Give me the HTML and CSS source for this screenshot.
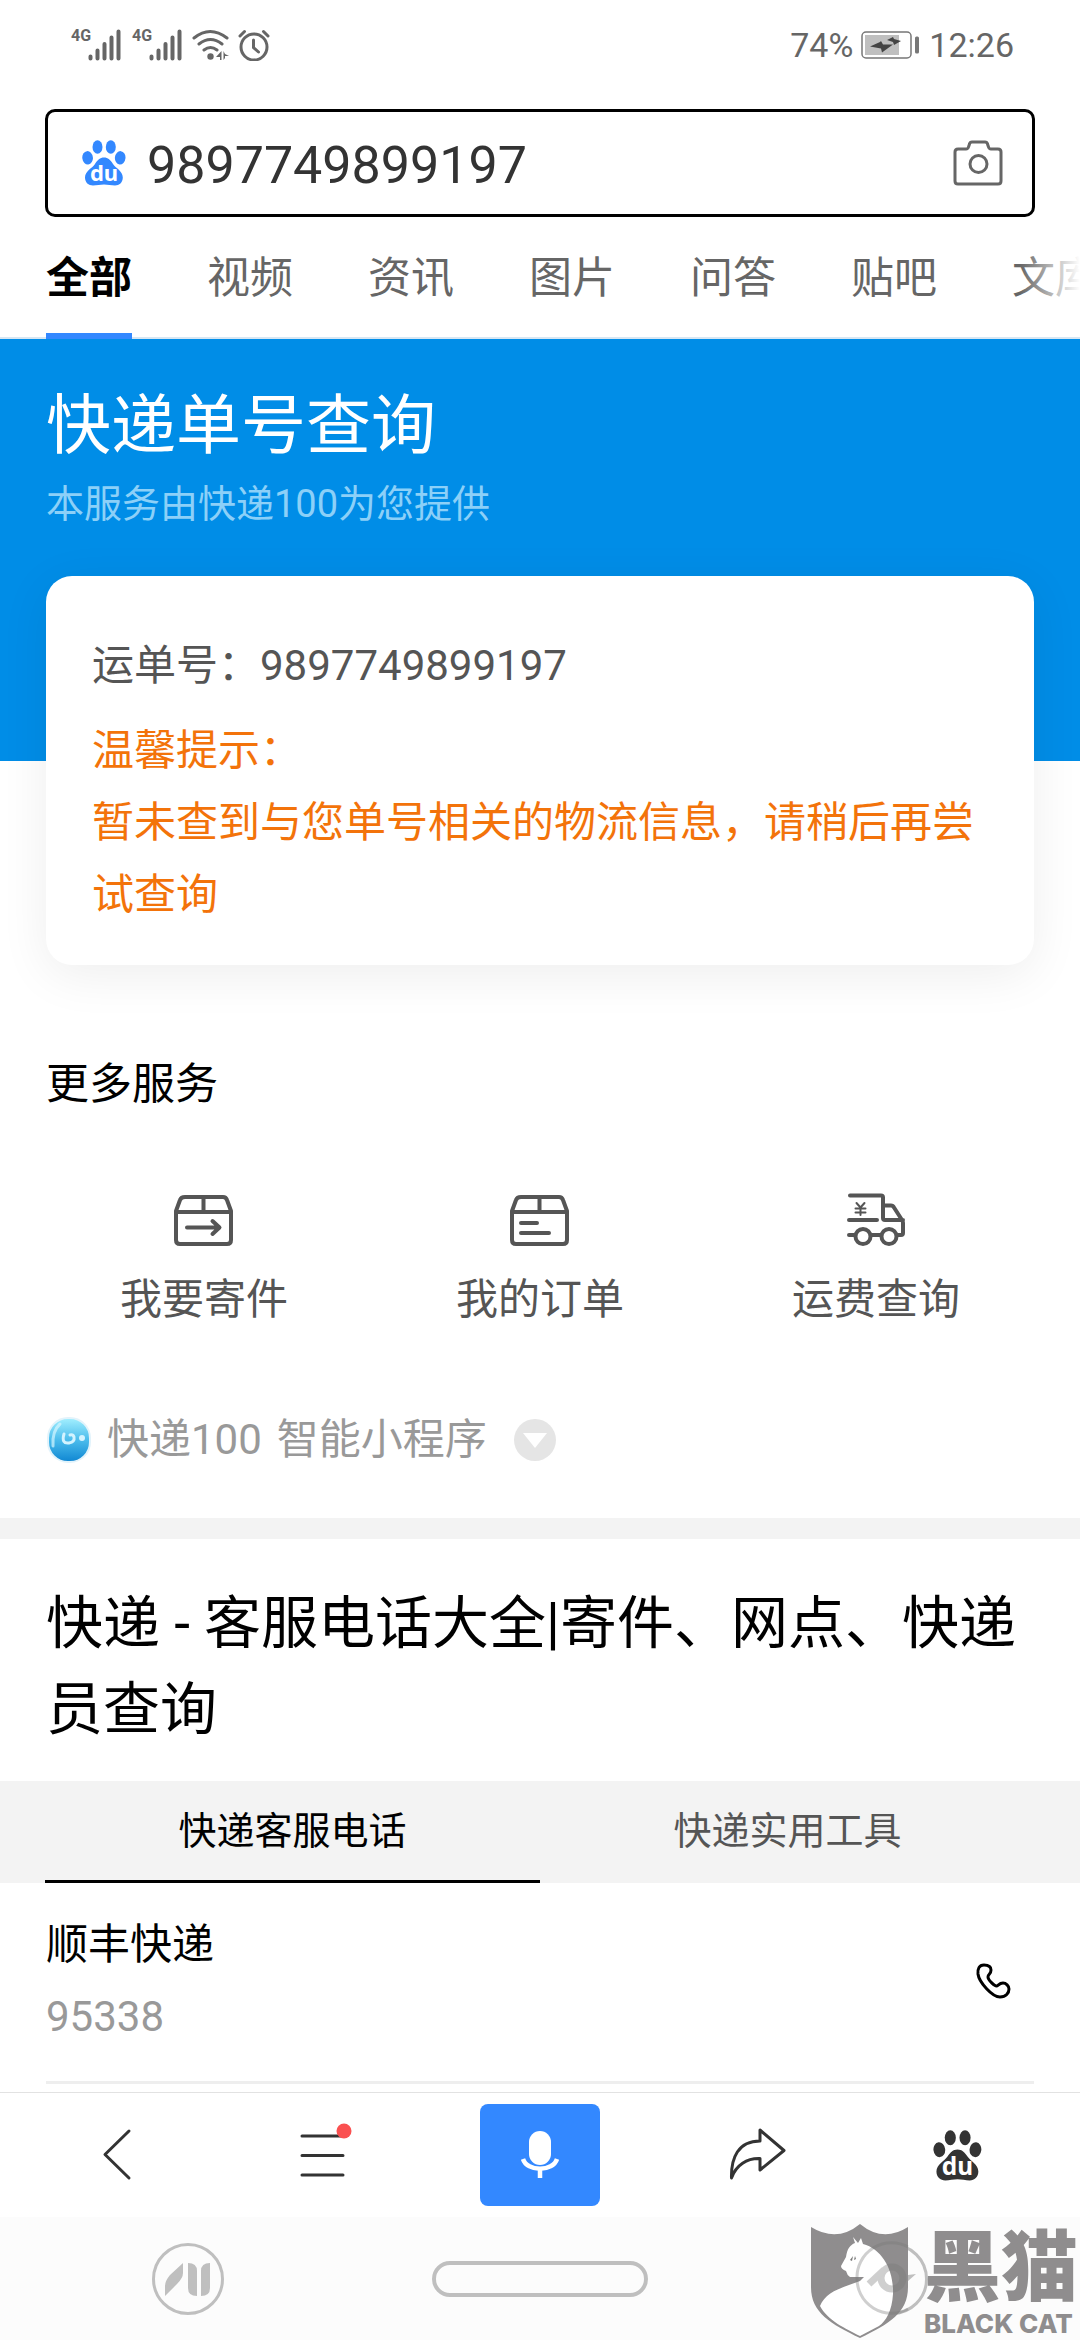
FILE: index.html
```html
<!DOCTYPE html>
<html lang="zh-CN">
<head>
	<meta charset="UTF-8">
	<meta name="viewport" content="width=device-width, initial-scale=1.0">
	<meta name="format-detection" content="telephone=no">
	<title>9897749899197</title>
	<link rel="stylesheet" href="styles.css">
</head>
<body>
	<svg class="defs" aria-hidden="true">
		<symbol id="paw" viewBox="0 0 44 46">
			<ellipse cx="15.5" cy="7" rx="5" ry="6.7"/>
			<ellipse cx="28.8" cy="7" rx="5" ry="6.7"/>
			<ellipse cx="5.6" cy="17.8" rx="5.3" ry="6.7" transform="rotate(-6 5.6 17.8)"/>
			<ellipse cx="38.2" cy="17.8" rx="5.3" ry="6.7" transform="rotate(6 38.2 17.8)"/>
			<path d="M22 17.5c4 0 6.500 2.500 9 6.500 2.500 4 9.800 7 9.800 13.500 0 5-3.500 8-7.800 8-4 0-7-1-11-1s-7 1-11 1c-4.500 0-8-3-8-8 0-6.500 7.500-9.500 10-13.500s5-6.500 9-6.500z"/>
			<text class="paw-text" x="22" y="41" text-anchor="middle">du</text>
		</symbol>
		<symbol id="signal" viewBox="0 0 34 32">
			<path d="M2.500 27.500v2M9.500 21.500v8M16.500 15v14.500M23.500 8.500v21M30.500 2.500v27" fill="none" stroke="#666" stroke-width="4" stroke-linecap="round"/>
		</symbol>
	</svg>

	<div class="status">
		<span class="net">4G</span><svg class="signal"><use href="#signal"/></svg>
		<span class="net net-2">4G</span><svg class="signal"><use href="#signal"/></svg>
		<svg class="wifi" viewBox="0 0 38 32">
			<path d="M2 9q16-13 33 0M7 15q11.500-9 23 0M12 21q6.500-5 13 0" fill="none" stroke="#666" stroke-width="3" stroke-linecap="round"/>
			<circle cx="18.500" cy="27.500" r="3.200" fill="#666"/>
			<path d="M29.500 22v9h-1.500v-3h-4zM31.500 22v9l1.500-2v-2h4l-4-2z" fill="#666"/>
		</svg>
		<svg class="alarm" viewBox="0 0 32 32">
			<g fill="none" stroke="#666" stroke-width="3" stroke-linecap="round">
				<circle cx="16" cy="18" r="13"/>
				<path d="M15.500 11v7.500l5 4.500M2 7l4.500-4.500M30 7l-4.500-4.500"/>
			</g>
		</svg>
		<span class="percent">74%</span>
		<svg class="battery" viewBox="0 0 60 28">
			<rect x="1" y="1" width="49" height="26" rx="4" fill="#fff" stroke="#777" stroke-width="1.500"/>
			<rect x="4" y="4" width="34" height="20" fill="#bfbfbf"/>
			<rect x="54" y="5.500" width="4" height="17" rx="1.500" fill="#777"/>
			<path d="M9 15.500l10-4.500 1-1 2 3.500h10l-11 8-1-4zM26 9l6-3 1 2 7 2-7 4-1-3z" fill="#444"/>
		</svg>
		<span class="time">12:26</span>
	</div>

	<form class="search">
		<svg class="search-logo"><use href="#paw"/></svg>
		<input class="search-input" type="text" value="9897749899197" aria-label="搜索">
		<button class="camera" type="button" aria-label="拍照搜索">
			<svg viewBox="0 0 50 46">
				<path d="M5 9h8q2 0 2.500-2l1-3q.5-2 2.500-2h13q2 0 2.500 2l1 3q.5 2 2.500 2h7q3 0 3 3v29q0 3-3 3h-40q-3 0-3-3v-29q0-3 3-3z"/>
				<circle cx="25.500" cy="24" r="8.500"/>
			</svg>
		</button>
	</form>

	<nav class="tabs">
		<a class="tab active" href="#">全部</a>
		<a class="tab" href="#">视频</a>
		<a class="tab" href="#">资讯</a>
		<a class="tab" href="#">图片</a>
		<a class="tab" href="#">问答</a>
		<a class="tab" href="#">贴吧</a>
		<a class="tab" href="#">文库</a>
	</nav>

	<main>
		<section class="express">
			<div class="banner">
				<h1>快递单号查询</h1>
				<p>本服务由快递100为您提供</p>
			</div>
			<div class="card">
				<p class="number">运单号：9897749899197</p>
				<p class="tip">温馨提示：<br>暂未查到与您单号相关的物流信息，请稍后再尝试查询</p>
			</div>
			<h2 class="more">更多服务</h2>
			<div class="services">
				<a class="service" href="#">
					<svg viewBox="0 0 60 60">
						<path d="M11 7h38q3 0 4 3l4 11v29q0 4-4 4H6q-4 0-4-4V21l4-11q1-3 5-3zM2 22h55M29.500 7v15M13 37.500h32M38.500 31l7 6.500-7 6.500"/>
					</svg>
					<span>我要寄件</span>
				</a>
				<a class="service" href="#">
					<svg viewBox="0 0 60 60">
						<path d="M11 7h38q3 0 4 3l4 11v29q0 4-4 4H6q-4 0-4-4V21l4-11q1-3 5-3zM2 22h55M29.500 7v15M11 33h16M11 43h28"/>
					</svg>
					<span>我的订单</span>
				</a>
				<a class="service" href="#">
					<svg viewBox="0 0 60 60">
						<path d="M4 5.500h31q2 0 2 2V28q0 2 2 2h18M3 30h28M37 15.500h8q2 0 3 2l8 12.500q1 1 1 3v10q0 2-2 2h-3M3 45h5M26 45h8"/>
						<circle cx="17" cy="46.500" r="7.500"/>
						<circle cx="43" cy="46.500" r="7.500"/>
						<path class="thin" d="M10.500 13l4 4.500 4-4.500M9.500 18.500h10M9.500 22.500h10M14.500 18v7"/>
					</svg>
					<span>运费查询</span>
				</a>
			</div>
			<div class="source">
				<svg class="source-logo" viewBox="0 0 44 46">
					<defs>
						<linearGradient id="ball" x1="0" y1="0" x2="0" y2="1">
							<stop offset="0" stop-color="#a4f0ff"/>
							<stop offset=".5" stop-color="#4bbcec"/>
							<stop offset="1" stop-color="#0f86d2"/>
						</linearGradient>
					</defs>
					<rect x="1" y="1" width="42" height="44" rx="20" fill="url(#ball)" stroke="#e2f3fb" stroke-width="2"/>
					<path d="M6 29q-1-15 7-22" fill="none" stroke="#d5f6ff" stroke-width="3" stroke-linecap="round" opacity=".7"/>
					<path d="M17 17q-3 10 5 9 6-1 5-6-1-3-4-2" fill="none" stroke="#d3f3ff" stroke-width="3" stroke-linecap="round"/>
					<circle cx="35" cy="21" r="3" fill="#d3f3ff"/>
				</svg>
				<span>快递100</span>
				<span>智能小程序</span>
				<button class="drop" type="button" aria-label="展开"></button>
			</div>
		</section>

		<section class="phones">
			<h2 class="phones-title">快递 - 客服电话大全|寄件、网点、快递员查询</h2>
			<div class="switch">
				<button class="switch-item active" type="button">快递客服电话</button>
				<button class="switch-item" type="button">快递实用工具</button>
			</div>
			<div class="phone">
				<div>
					<p class="phone-name">顺丰快递</p>
					<p class="phone-num">95338</p>
				</div>
				<a class="call" href="tel:95338" aria-label="拨打95338">
					<svg viewBox="0 0 36 36">
						<path d="M8 2C3 2 1.500 6 2 11c1 8 14 23 22 23 6 0 9-4 9-8 0-3-3-6-6-6-4 0-5 3-6.500 3-2 0-8.500-6-8.500-9s3-2.500 3-7c0-3-2-5-7-5z"/>
					</svg>
				</a>
			</div>
		</section>
	</main>

	<footer>
		<div class="toolbar">
			<button class="tool" type="button" aria-label="返回">
				<svg width="28" height="52" viewBox="0 0 28 52"><path d="M26 2L2 25.500 26 49"/></svg>
			</button>
			<button class="tool" type="button" aria-label="菜单">
				<svg width="52" height="52" viewBox="0 0 52 52">
					<path d="M5 7h41M5 26.500h41M5 46h41"/>
					<circle class="dot" cx="47" cy="2" r="7.500"/>
				</svg>
			</button>
			<button class="tool" type="button" aria-label="语音">
				<span class="mic">
					<svg width="40" height="50" viewBox="0 0 40 50">
						<rect x="9" y="1" width="22" height="34" rx="11" fill="#fff"/>
						<path d="M3 29c4 13 30 13 34 0M20 39v9" fill="none" stroke="#fff" stroke-width="4.500"/>
					</svg>
				</span>
			</button>
			<button class="tool" type="button" aria-label="分享">
				<svg width="58" height="54" viewBox="0 0 58 54"><path d="M31 2l24 20.500L31 42V30.500C18 30 7 37 2.500 50 2 30 9 13 31 13z"/></svg>
			</button>
			<button class="tool" type="button" aria-label="首页">
				<svg class="tool-logo" width="49" height="51"><use href="#paw"/></svg>
			</button>
		</div>
		<div class="sysnav">
			<svg width="72" height="72" viewBox="0 0 72 72">
				<circle cx="36" cy="36" r="34.500" fill="none" stroke="#bfbfbf" stroke-width="3"/>
				<path d="M31 20v10q0 5-6 11L13 53V43q0-5 5-11zM36 20q9 0 9 8v25q-9 0-9-8zM58 20q-9 0-9 8v25q9 0 9-8z" fill="#bfbfbf"/>
			</svg>
			<span class="home"></span>
			<svg width="72" height="72" viewBox="0 0 72 72">
				<circle cx="36" cy="36" r="34.500" fill="none" stroke="#bfbfbf" stroke-width="3"/>
				<circle cx="36" cy="36" r="12" fill="none" stroke="#bfbfbf" stroke-width="5"/>
				<path d="M12 41l16-14q4-3 8-3l-8 12q-3 4-8 4zM60 31L44 45q-4 3-8 3l8-12q3-4 8-4z" fill="#bfbfbf"/>
			</svg>
		</div>
	</footer>

	<div class="mark">
		<svg width="98" height="116" viewBox="0 0 98 116">
			<path d="M0 3q26 16 49-3 23 19 48 3v60c0 26-19 37-48 51C20 100 0 89 0 63z" fill="#8f8d8e"/>
			<path d="M42 13l5 6 3-5 2 6c19 5 31 26 30 50-1 17-7 27-14 32l-19 10C35 105 16 96 9 82c6-15 24-19 40-25l4-4H39q-3-2-4-6-5-2-5-5l5-9c1-8 4-12 9-14z" fill="#fff"/>
			<path d="M39 36l3-4-1 5zM43 36l1-4 1 3z" fill="#777"/>
			<!-- nav ring shows through the badge -->
			<g fill="none" stroke="#777" opacity=".35">
				<path d="M46 54a34.500 34.500 0 0 1 51-31M46 54a34.500 34.500 0 0 0 51 31" stroke-width="3"/>
				<circle cx="81" cy="54" r="11" stroke-width="7"/>
				<path d="M58 60l15-14" stroke-width="7"/>
			</g>
		</svg>
		<div class="mark-name"><b>黑猫</b><span>BLACK CAT</span></div>
	</div>
</body>
</html>
```
FILE: styles.css
```css
*{margin: 0;padding: 0;box-sizing: border-box;}
body{position: relative;display: flex;flex-direction: column;min-height: 100vh;background: #fff;color: #000;
	font-family: Roboto, "Noto Sans CJK SC", sans-serif;font-size: 42px;overflow-x: hidden;
}
a{color: inherit;text-decoration: none;}
button, input{border: 0;background: none;font: inherit;color: inherit;}
h1, h2{font-weight: normal;}
svg{display: block;flex: none;}
.defs{position: absolute;width: 0;height: 0;overflow: visible;}

.status{display: flex;align-items: center;height: 90px;padding: 0 66px 0 71px;color: #666;font-size: 34px;}
.net{align-self: flex-start;padding-top: 26px;width: 17px;font: bold 16px/20px Roboto, sans-serif;}
.net-2{margin-left: 10px;}
.signal{width: 34px;height: 32px;}
.wifi{width: 38px;height: 32px;margin-left: 9px;}
.alarm{width: 32px;height: 32px;margin-left: 8px;}
.percent{margin-left: auto;}
.battery{width: 60px;height: 28px;margin: 0 8px;}

.search{display: flex;align-items: center;height: 108px;margin: 19px 45px 0;padding: 0 29px 0 34px;border: 3px solid #000;border-radius: 10px;}
.search-logo{width: 44px;height: 46px;fill: #38f;}
.paw-text{fill: #fff;font: bold 22px "Noto Sans", sans-serif;}
.search-input{flex: 1;min-width: 0;height: 100px;margin-left: 21px;padding-top: 4px;font-size: 52px;color: #333;outline: 0;}
.camera svg{width: 50px;height: 46px;fill: none;stroke: #666;stroke-width: 3;}

.tabs{position: relative;display: flex;gap: 75px;padding-left: 46px;overflow: hidden;box-shadow: inset 0 -2px #d6e6f3;}
.tabs:after{content: "";position: absolute;right: 0;top: 0;width: 60px;height: 118px;background: linear-gradient(to right, rgba(255,255,255,0), #fff);}
.tab{flex: none;padding: 31px 0 25px;border-bottom: 6px solid transparent;font-size: 43px;line-height: 60px;color: #666;}
.tab.active{border-color: #38f;color: #000;font-weight: bold;}

.banner{padding: 43px 46px 223px;background: #008de7;color: #fff;}
.banner h1{font-size: 65px;line-height: 88px;}
.banner p{font-size: 38px;line-height: 68px;color: #8cd0f8;}
.card{position: relative;margin: -185px 46px 0;padding: 54px 46px 34px;border-radius: 26px;background: #fff;box-shadow: 0 10px 50px rgba(0,0,0,.07);line-height: 72px;}
.number{color: #555;}
.tip{margin-top: 13px;color: #f3730a;}
.more{margin: 89px 46px 0;font-size: 43px;line-height: 60px;}
.services{display: flex;gap: 20px;margin: 76px 46px 0;}
.service{display: flex;flex: 1;flex-direction: column;align-items: center;gap: 20px;line-height: 60px;color: #555;}
.service svg{width: 60px;height: 60px;fill: none;stroke: #555;stroke-width: 4;stroke-linecap: round;stroke-linejoin: round;}
.service .thin{stroke-width: 2;}
.source{display: flex;align-items: center;gap: 15px;margin: 80px 46px 48px;line-height: 60px;color: #999;}
.source-logo{width: 46px;height: 46px;}
.drop{display: flex;align-items: center;justify-content: center;width: 42px;height: 42px;margin-left: 12px;border-radius: 50%;background: #e5e5e5;}
.drop:after{content: "";border: 12px solid transparent;border-top: 15px solid #fff;border-bottom: 0;}

.phones{border-top: 21px solid #f3f3f3;padding-bottom: 8px;}
.phones-title{margin: 42px 36px 28px 46px;font-size: 57px;line-height: 86px;}
.switch{display: flex;padding: 0 45px;background: #f3f3f3;}
.switch-item{flex: 1;height: 102px;border-bottom: 3px solid transparent;font-size: 38px;line-height: 56px;color: #555;}
.switch-item.active{border-color: #000;color: #000;}
.phone{display: flex;align-items: center;justify-content: space-between;margin: 0 46px;padding: 26px 22px 28px 0;border-bottom: 3px solid #eee;line-height: 72px;}
.phone-num{color: #999;}
.call svg{width: 36px;height: 36px;fill: none;stroke: #000;stroke-width: 3;}

footer{margin-top: auto;}
.toolbar{display: grid;grid-template-columns: 206fr 206fr 227fr 210fr 188fr;height: 125px;padding: 0 29px 0 14px;border-top: 1px solid #e2e2e2;}
.tool{display: flex;align-items: center;justify-content: center;}
.tool svg{fill: none;stroke: #333;stroke-width: 3;stroke-linecap: round;stroke-linejoin: round;overflow: visible;}
.tool .dot{fill: #fa5050;stroke: none;}
.tool .tool-logo{fill: #333;stroke: none;}
.mic{display: flex;align-items: center;justify-content: center;width: 120px;height: 102px;border-radius: 8px;background: #38f;}
.mic svg{stroke: none;stroke-linecap: butt;}
.sysnav{display: grid;grid-template-columns: repeat(3, 1fr);align-items: center;justify-items: center;height: 123px;padding: 0 12px;background: #fcfcfc;}
.home{width: 216px;height: 36px;border: 4px solid #bfbfbf;border-radius: 18px;}

.mark{position: absolute;right: 2px;bottom: 0;display: flex;align-items: flex-end;gap: 15px;color: #8f8d8e;}
.mark-name{display: flex;flex-direction: column;width: 154px;}
.mark-name b{font-size: 77px;font-weight: 900;line-height: 78px;white-space: nowrap;}
.mark-name span{font: 800 26px/32px Inter, sans-serif;white-space: nowrap;}
```
